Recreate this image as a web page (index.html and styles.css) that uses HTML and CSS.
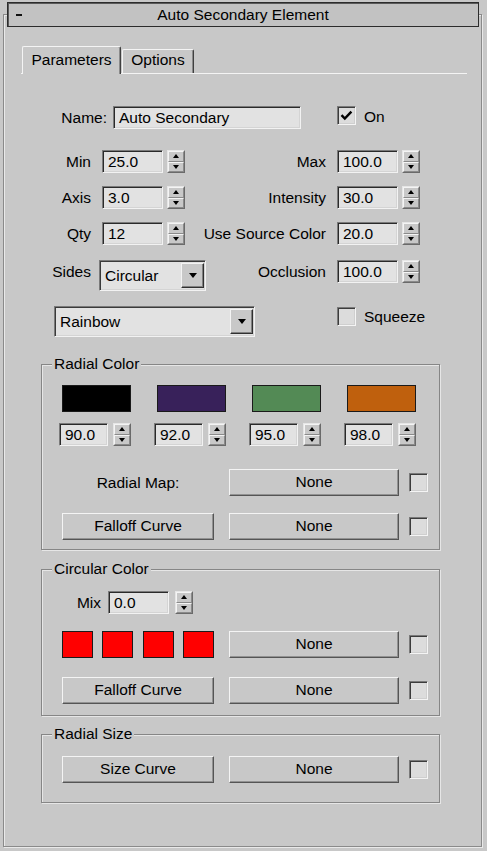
FILE: index.html
```html
<!DOCTYPE html>
<html>
<head>
<meta charset="utf-8">
<title>Auto Secondary Element</title>
<link rel="stylesheet" href="styles.css">
</head>
<body>
<div class="titlebar">
  <span class="collapse"></span>
  <span class="title">Auto Secondary Element</span>
  <span></span>
</div>
<div class="frame">
  <div class="tabs">
    <div class="tab tab-active">Parameters</div>
    <div class="tab tab-options">Options</div>
  </div>

  <div class="name-row">
    <span class="lbl lbl-name">Name:</span>
    <div class="field field-name">Auto Secondary</div>
    <span class="check check-on"><svg class="tick" viewBox="0 0 17 17"><path d="M3.5 8.2 L6.8 11.6 L13.4 4.6"/></svg></span>
    <span class="check-text">On</span>
  </div>

  <div class="prow prow-first">
    <div class="half-left">
      <span class="lbl lbl-l">Min</span>
      <div class="field field-num">25.0</div>
      <div class="spin"><span class="spin-up"></span><span class="spin-down"></span></div>
    </div>
    <div class="half-right">
      <span class="lbl lbl-r">Max</span>
      <div class="field field-num">100.0</div>
      <div class="spin"><span class="spin-up"></span><span class="spin-down"></span></div>
    </div>
  </div>

  <div class="prow">
    <div class="half-left">
      <span class="lbl lbl-l">Axis</span>
      <div class="field field-num">3.0</div>
      <div class="spin"><span class="spin-up"></span><span class="spin-down"></span></div>
    </div>
    <div class="half-right">
      <span class="lbl lbl-r">Intensity</span>
      <div class="field field-num">30.0</div>
      <div class="spin"><span class="spin-up"></span><span class="spin-down"></span></div>
    </div>
  </div>

  <div class="prow">
    <div class="half-left">
      <span class="lbl lbl-l">Qty</span>
      <div class="field field-num">12</div>
      <div class="spin"><span class="spin-up"></span><span class="spin-down"></span></div>
    </div>
    <div class="half-right">
      <span class="lbl lbl-r">Use Source Color</span>
      <div class="field field-num">20.0</div>
      <div class="spin"><span class="spin-up"></span><span class="spin-down"></span></div>
    </div>
  </div>

  <div class="prow prow-sides">
    <div class="half-left">
      <span class="lbl lbl-l">Sides</span>
      <div class="dropdown dd-sides"><span class="dd-text">Circular</span><span class="dd-btn raised"></span></div>
    </div>
    <div class="half-right">
      <span class="lbl lbl-r">Occlusion</span>
      <div class="field field-num">100.0</div>
      <div class="spin"><span class="spin-up"></span><span class="spin-down"></span></div>
    </div>
  </div>

  <div class="rainbow-row">
    <div class="dropdown dd-rainbow"><span class="dd-text">Rainbow</span><span class="dd-btn raised"></span></div>
    <span class="check check-squeeze"></span>
    <span class="check-text">Squeeze</span>
  </div>

  <div class="group group-radial">
    <div class="group-title">Radial Color</div>
    <div class="swatch-row">
      <div class="col">
        <div class="swatch" style="background:#000000"></div>
        <div class="num-row"><div class="field field-small">90.0</div><div class="spin spin-small"><span class="spin-up"></span><span class="spin-down"></span></div></div>
      </div>
      <div class="col">
        <div class="swatch" style="background:#38215a"></div>
        <div class="num-row"><div class="field field-small">92.0</div><div class="spin spin-small"><span class="spin-up"></span><span class="spin-down"></span></div></div>
      </div>
      <div class="col">
        <div class="swatch" style="background:#538a55"></div>
        <div class="num-row"><div class="field field-small">95.0</div><div class="spin spin-small"><span class="spin-up"></span><span class="spin-down"></span></div></div>
      </div>
      <div class="col">
        <div class="swatch" style="background:#bf600d"></div>
        <div class="num-row"><div class="field field-small">98.0</div><div class="spin spin-small"><span class="spin-up"></span><span class="spin-down"></span></div></div>
      </div>
    </div>
    <div class="brow brow-map">
      <span class="cell152 cell-label">Radial Map:</span>
      <span class="btn btn-none raised">None</span>
      <span class="check"></span>
    </div>
    <div class="brow brow-falloff">
      <span class="cell152 btn raised">Falloff Curve</span>
      <span class="btn btn-none raised">None</span>
      <span class="check"></span>
    </div>
  </div>

  <div class="group group-circular">
    <div class="group-title">Circular Color</div>
    <div class="mix-row">
      <span class="lbl lbl-mix">Mix</span>
      <div class="field field-mix">0.0</div>
      <div class="spin spin-mix"><span class="spin-up"></span><span class="spin-down"></span></div>
    </div>
    <div class="brow brow-squares">
      <span class="cell152 squares"><span class="sq"></span><span class="sq"></span><span class="sq"></span><span class="sq"></span></span>
      <span class="btn btn-none raised">None</span>
      <span class="check"></span>
    </div>
    <div class="brow brow-falloff2">
      <span class="cell152 btn raised">Falloff Curve</span>
      <span class="btn btn-none raised">None</span>
      <span class="check"></span>
    </div>
  </div>

  <div class="group group-size">
    <div class="group-title">Radial Size</div>
    <div class="brow brow-size">
      <span class="cell152 btn raised">Size Curve</span>
      <span class="btn btn-none raised">None</span>
      <span class="check"></span>
    </div>
  </div>
</div>
</body>
</html>
```

FILE: styles.css
```css
* {
  box-sizing: border-box;
}

html,
body {
  margin: 0;
  padding: 0;
}

body {
  width: 487px;
  height: 851px;
  overflow: hidden;
  background: #c8c8c8;
  color: #000;
  font-family: "Liberation Sans", Arial, sans-serif;
  font-size: 15.5px;
}

/* ---------- rollout title bar ---------- */
.titlebar {
  position: relative;
  z-index: 1;
  display: grid;
  grid-template-columns: 30px 1fr 30px;
  align-items: center;
  height: 25px;
  margin: 2px 8px 0 7px;
  background: #c2c2c2;
  border: 1px solid #2c2c2c;
  box-shadow: inset 1px 1px 0 #5a5a5a;
}

.collapse {
  display: block;
  width: 6px;
  height: 2px;
  margin-left: 8px;
  background: #111;
}

.title {
  text-align: center;
  line-height: 23px;
  white-space: nowrap;
}

/* ---------- rollout frame ---------- */
.frame {
  width: 479px;
  margin: -13px 0 0 3px;
  padding-bottom: 43px;
  border: 1px solid #8a8a8a;
  box-shadow: inset 1px 1px 0 #e9e9e9, 1px 1px 0 #e9e9e9;
}

/* ---------- tabs ---------- */
.tabs {
  display: flex;
  align-items: flex-end;
  width: 446px;
  height: 28px;
  margin: 31px 0 0 17px;
  border-bottom: 1px solid #f4f4f4;
}

.tab {
  background: #c8c8c8;
  text-align: center;
  line-height: 18px;
  border-top: 1px solid #f4f4f4;
  border-left: 1px solid #f4f4f4;
  border-right: 1px solid #404040;
  border-radius: 2px 2px 0 0;
  box-shadow: inset -1px 0 0 #8a8a8a;
  white-space: nowrap;
}

.tab-active {
  width: 99px;
  height: 28px;
  margin-left: 1px;
  margin-bottom: -1px;
  padding-top: 4px;
}

.tab-options {
  width: 72px;
  height: 24px;
  margin-left: 1px;
  padding-top: 1px;
}

/* ---------- generic controls ---------- */
.lbl {
  flex-shrink: 0;
  line-height: 23px;
  text-align: right;
  white-space: nowrap;
}

.field {
  flex-shrink: 0;
  height: 23px;
  padding-left: 5px;
  line-height: 21px;
  background: #e2e2e2;
  border: 1px solid;
  border-color: #7a7a7a #f2f2f2 #f2f2f2 #7a7a7a;
  box-shadow: inset 1px 1px 0 #2a2a2a, inset -1px -1px 0 #d4d4d4;
  white-space: nowrap;
  overflow: hidden;
}

.spin {
  flex-shrink: 0;
  display: flex;
  flex-direction: column;
  width: 18px;
  height: 23px;
  margin-left: 4px;
  border: 1px solid;
  border-color: #e6e6e6 #6a6a6a #6a6a6a #e6e6e6;
}

.spin-up,
.spin-down {
  flex: 1;
  display: flex;
  align-items: center;
  justify-content: center;
  background: #c8c8c8;
  border: 1px solid;
  border-color: #f4f4f4 #8a8a8a #8a8a8a #f4f4f4;
}

.spin-up::after {
  content: "";
  border-left: 3px solid transparent;
  border-right: 3px solid transparent;
  border-bottom: 4px solid #000;
}

.spin-down::after {
  content: "";
  border-left: 3px solid transparent;
  border-right: 3px solid transparent;
  border-top: 4px solid #000;
}

.raised {
  background: #c8c8c8;
  border: 1px solid;
  border-color: #f4f4f4 #555 #555 #f4f4f4;
  box-shadow: inset -1px -1px 0 #929292;
}

.check {
  flex-shrink: 0;
  display: block;
  width: 19px;
  height: 19px;
  background: #dcdcdc;
  border: 1px solid;
  border-color: #7a7a7a #f4f4f4 #f4f4f4 #7a7a7a;
  box-shadow: inset 1px 1px 0 #3c3c3c, inset -1px -1px 0 #cfcfcf;
}

.tick {
  display: block;
  width: 17px;
  height: 17px;
}

.tick path {
  fill: none;
  stroke: #000;
  stroke-width: 2.4;
}

.check-text {
  margin-left: 8px;
  white-space: nowrap;
}

.dropdown {
  flex-shrink: 0;
  display: flex;
  height: 31px;
  padding: 2px 1px 2px 5px;
  background: #e2e2e2;
  border: 1px solid;
  border-color: #7a7a7a #f2f2f2 #f2f2f2 #7a7a7a;
  box-shadow: inset 1px 1px 0 #3a3a3a, inset -1px -1px 0 #d4d4d4;
}

.dd-text {
  flex: 1;
  line-height: 26px;
  white-space: nowrap;
}

.dd-btn {
  display: flex;
  align-items: center;
  justify-content: center;
  width: 23px;
  border-color: #f4f4f4 #303030 #303030 #f4f4f4;
  box-shadow: inset -1px -1px 0 #808080;
}

.dd-btn::after {
  content: "";
  border-left: 4px solid transparent;
  border-right: 4px solid transparent;
  border-top: 5px solid #000;
}

/* ---------- name row ---------- */
.name-row {
  display: flex;
  align-items: flex-start;
  height: 23px;
  margin-top: 32px;
}

.lbl-name {
  width: 103px;
}

.field-name {
  width: 188px;
  margin-left: 6px;
}

.check-on {
  margin-left: 36px;
}

.name-row .check-text {
  line-height: 21px;
}

/* ---------- parameter rows ---------- */
.prow {
  display: flex;
  height: 23px;
  margin-top: 13px;
}

.prow-first {
  margin-top: 21px;
}

.prow-sides {
  align-items: flex-start;
  height: 31px;
  margin-top: 15px;
}

.half-left {
  display: flex;
  flex-shrink: 0;
  width: 181px;
}

.half-right {
  display: flex;
}

.lbl-l {
  width: 87px;
}

.lbl-r {
  width: 141px;
}

.field-num {
  width: 61px;
  margin-left: 11px;
}

.dd-sides {
  width: 107px;
  margin-left: 8px;
}

.rainbow-row {
  display: flex;
  align-items: flex-start;
  height: 31px;
  margin-top: 15px;
}

.dd-rainbow {
  width: 201px;
  margin-left: 50px;
}

.check-squeeze {
  margin-top: 1px;
  margin-left: 82px;
}

.rainbow-row .check-text {
  line-height: 21px;
}

/* ---------- groups ---------- */
.group {
  width: 399px;
  margin: 27px 0 0 37px;
  border: 1px solid #868686;
  box-shadow: inset 1px 1px 0 #e6e6e6, 1px 1px 0 #e6e6e6;
}

.group-title {
  display: table;
  margin: -10px 0 0 10px;
  padding: 0 2px;
  line-height: 18px;
  background: #c8c8c8;
}

.group-radial {
  padding-bottom: 9px;
}

.group-circular {
  margin-top: 19px;
  padding-bottom: 11px;
}

.group-size {
  margin-top: 18px;
  padding-bottom: 19px;
}

.swatch-row {
  display: flex;
  gap: 23px;
  margin: 12px 0 0 17px;
}

.col {
  width: 72px;
}

.swatch {
  width: 69px;
  height: 27px;
  margin-left: 3px;
  border: 1px solid #1a1a1a;
}

.num-row {
  display: flex;
  margin-top: 11px;
}

.field-small {
  width: 49px;
}

.spin-small {
  margin-left: 5px;
}

.brow {
  display: flex;
  align-items: center;
  height: 27px;
  margin-left: 20px;
}

.brow-map {
  margin-top: 23px;
}

.brow-falloff {
  margin-top: 17px;
}

.brow-squares {
  margin-top: 17px;
}

.brow-falloff2 {
  margin-top: 19px;
}

.brow-size {
  margin-top: 13px;
}

.cell152 {
  flex-shrink: 0;
  width: 152px;
  height: 27px;
}

.btn {
  display: block;
  text-align: center;
  line-height: 24px;
  white-space: nowrap;
}

.cell-label {
  text-align: center;
  line-height: 27px;
  white-space: nowrap;
}

.btn-none {
  flex-shrink: 0;
  width: 170px;
  height: 27px;
  margin-left: 15px;
}

.brow .check {
  margin-left: 10px;
}

.mix-row {
  display: flex;
  margin-top: 13px;
}

.lbl-mix {
  width: 59px;
}

.field-mix {
  width: 61px;
  margin-left: 7px;
}

.spin-mix {
  margin-left: 6px;
}

.squares {
  display: flex;
  justify-content: space-between;
}

.sq {
  display: block;
  width: 31px;
  height: 27px;
  background: #ff0000;
  border: 1px solid #1a1a1a;
}
```
